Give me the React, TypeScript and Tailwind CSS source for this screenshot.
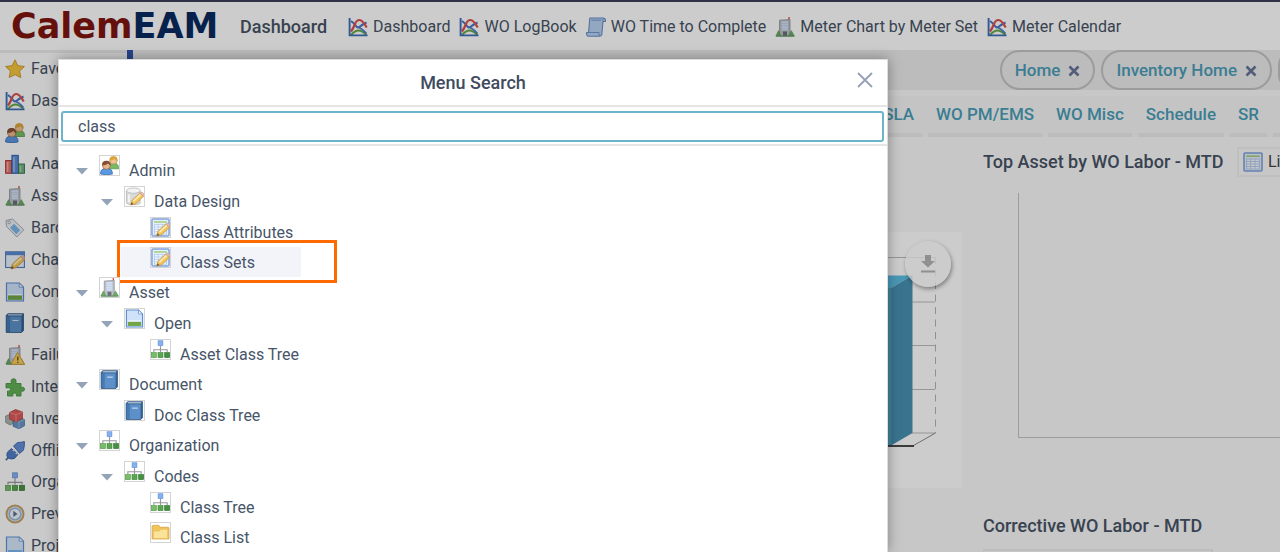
import React from "react";

type IconName =
  | "star" | "lines" | "people" | "bars" | "building" | "tag" | "change" | "picture"
  | "book" | "failure" | "puzzle" | "cubes" | "plug" | "org" | "clock" | "page"
  | "scroll" | "dbEdit" | "tableEdit" | "folder" | "table";

const Pencil = () => (
  <g>
    <path d="M6 19l1.400-5L15.500 6.500l4 3.400-8.200 7.700z" fill="#f3c55c" stroke="#c08f3a" strokeWidth=".7" />
    <path d="M8.800 15l7.800-7.200" stroke="#fdeebb" strokeWidth="1.600" />
    <path d="M15.500 6.500l1.400-1.200q2 .3 3 2l-.4 2.600z" fill="#e8b9a4" stroke="#b98" strokeWidth=".5" />
    <path d="M6 19l.9-3 2 2z" fill="#7a5526" />
  </g>
);

const Building = () => (
  <g>
    <path d="M14 0v3" stroke="#d33" strokeWidth="1.200" />
    <path d="M4.500 3.200L15 2.600V19H4.500z" fill="#bcc0c6" stroke="#8d9299" strokeWidth=".8" />
    <path d="M6.600 5.200h6.400M6.600 7.600h6.400M6.600 10h6.400M6.600 12.200h6.400" stroke="#cfe0f8" strokeWidth="1.900" />
    <path d="M8 14.500h4V19H8z" fill="#6b7179" />
    <path d="M.8 19l2.700-5.400L6.200 19zM13.400 19l2.900-5.400L19.400 19z" fill="#6bab64" stroke="#4c8f4e" strokeWidth=".5" />
    <path d="M1 19.200h18.400" stroke="#6d9a6c" />
  </g>
);

const TableGrid = () => (
  <g>
    <rect x="1" y="1" width="18" height="18" rx="1" fill="#e4effd" stroke="#7fa3dc" strokeWidth="1.600" />
    <path d="M3.200 4.200h13.600" stroke="#a6cc7c" strokeWidth="1.600" />
    <rect x="3.600" y="7" width="12.800" height="10" fill="#f4f8fe" stroke="#b3c9ea" strokeWidth=".9" />
    <path d="M3.600 9.500h12.800M3.600 12h12.800M3.600 14.500h12.800M7.600 7v10M12 7v10" stroke="#b3c9ea" strokeWidth=".9" />
  </g>
);

const shapes: Record<IconName, React.ReactNode> = {
  star: <path d="M10 .8l2.800 5.900 6.600.8-4.800 4.600 1.200 6.500L10 15.600l-5.800 3 1.200-6.500L.6 7.500l6.600-.8z" fill="#f3c53c" stroke="#cf9c33" strokeWidth="1" strokeLinejoin="round" />,
  lines: (
    <g fill="none">
      <path d="M3 18Q7 13.500 10.500 13.500T18.500 18" stroke="#62a848" strokeWidth="2.200" />
      <path d="M3 4q3.500 2.500 5 5t4 .5T18.500 5.500" stroke="#4a78c8" strokeWidth="2.100" />
      <path d="M10 10q4 1.500 8.500 6.500" stroke="#4a78c8" strokeWidth="1.500" />
      <path d="M3 14.500Q5.500 11 7 7t4.500-4 7.200 7.500" stroke="#dc4f4f" strokeWidth="2.200" />
      <path d="M1.600 1v17.400h17.900" stroke="#3f6fba" strokeWidth="1.900" />
    </g>
  ),
  people: (
    <g>
      <path d="M9.500 12.500q0-5 5-5t5 5v1h-9z" fill="#79b964" stroke="#4c8d42" strokeWidth=".7" />
      <circle cx="14.200" cy="4.600" r="3.900" fill="#f0c497" stroke="#b9813a" strokeWidth=".6" />
      <path d="M10 5Q9.600.3 14.300.3t4.200 5.500Q16.400 5 15.500 3.200 13 5.200 10 5z" fill="#dba53e" />
      <path d="M.6 19q-.5-6 6.200-6t6.200 6q-6.200 1.400-12.400 0z" fill="#5b98e2" stroke="#3468b0" strokeWidth=".8" />
      <circle cx="6.700" cy="9.800" r="4.200" fill="#e8b48c" stroke="#8d5a35" strokeWidth=".6" />
      <path d="M2.200 10Q1.800 5 6.800 5.100t4.400 5.300Q9.500 9.500 8.600 7.900 5.500 10.300 2.200 10z" fill="#855036" />
    </g>
  ),
  bars: (
    <g strokeWidth=".9">
      <rect x=".6" y="6.500" width="6" height="12.800" fill="#e2716b" stroke="#b4322e" />
      <rect x="6.900" y="1.300" width="6.400" height="18" fill="#5a8cd6" stroke="#2b57a6" />
      <rect x="13.500" y="10" width="6" height="9.300" fill="#6fae80" stroke="#33784a" />
      <path d="M2.600 8v10M9 3v15M15.500 11.500v6.500" stroke="#fff" strokeOpacity=".4" strokeWidth="1.600" />
    </g>
  ),
  building: <Building />,
  tag: (
    <g>
      <path d="M1 2.500L7.500 1 18.800 11.800 11.800 19 1.500 8.500z" fill="#edf0f3" stroke="#a3abb5" strokeWidth="1" strokeLinejoin="round" />
      <path d="M9 5.800l6.300 6.400-4 4L5 9.800z" fill="#7fb6e8" />
      <circle cx="4.200" cy="4.500" r="1.300" fill="#fff" stroke="#8d98a5" strokeWidth=".8" />
    </g>
  ),
  change: (
    <g>
      <rect x=".6" y="1.800" width="18.800" height="15.700" fill="#e8f0fb" stroke="#4f7bbf" strokeWidth="1.100" />
      <path d="M.8 2h18.400v3.200H.8z" fill="#5c89cf" />
      <Pencil />
    </g>
  ),
  picture: (
    <g>
      <path d="M1.500 1h12.700l4.300 4.200V19h-17z" fill="#cfe2fa" stroke="#5f8ccd" strokeWidth="1.200" />
      <path d="M14.200 1v4.200h4.300z" fill="#fff" stroke="#5f8ccd" strokeWidth=".8" />
      <path d="M3 13.500h14v4.300H3z" fill="#72a545" />
      <path d="M3 12.500h14" stroke="#f4faff" />
    </g>
  ),
  book: (
    <g>
      <path d="M1.200 2.500L2.800.7h15.700v16.800l-1.800 1.900H1.200z" fill="#35618f" stroke="#2b5384" strokeWidth=".8" />
      <path d="M3 1.900h14" stroke="#cfdcea" strokeWidth="1.100" />
      <path d="M4.600 3.500h11.800V19H4.600z" fill="#5d90c8" />
      <path d="M1.800 3.500h2.400v15.300H1.800z" fill="#447ab5" />
      <path d="M7.500 7.500h6" stroke="#d3e3f4" strokeWidth="1.100" />
    </g>
  ),
  failure: (
    <g>
      <Building />
      <path d="M12.500 7.500L19.600 19.300H6z" fill="#f5cf62" stroke="#cf9a38" strokeWidth="1" strokeLinejoin="round" />
      <path d="M12.800 11.500v4M12.800 16.700v1.300" stroke="#7a5a20" strokeWidth="1.500" />
    </g>
  ),
  puzzle: <path d="M1 6.500h5.500Q5 2 8.500 1.800T10.800 6.500H16v4.300q3.500-1.500 3.500 1.400T16 14v5h-4.600q1-3-1.700-3t-1.800 3H2.500v-5q3 .8 3-1.600T1 11z" fill="#63b156" stroke="#459543" strokeWidth=".9" strokeLinejoin="round" />,
  cubes: (
    <g strokeLinejoin="round" strokeWidth=".7">
      <path d="M.6 7l4.500-1.700 4 2v6.500l-4 2.200-4.500-2.500z" fill="#aab4af" stroke="#7c8782" />
      <path d="M8 10.500l6.500-2 5 2v6.300l-5.600 3-5.900-2.500z" fill="#6996c4" stroke="#426e9f" />
      <path d="M8 10.500l6 2.300 5.500-2.300M14 12.800v6.700" fill="none" stroke="#a7c9ee" />
      <path d="M4.500 3.500L10.500.5l7 2.500v6.500L11.200 13l-6.700-3z" fill="#dd5a5a" stroke="#b03b3b" />
      <path d="M4.500 3.500l6.500 2.300 6.500-2.800M11 5.800V13" fill="none" stroke="#f1a0a0" />
    </g>
  ),
  plug: (
    <g>
      <path d="M.8 19.200l3.500-3.700" stroke="#4b6da5" strokeWidth="1.700" />
      <path d="M2.500 11L6.500 7.500l6.500 6-3.500 4q-4 1.500-7-1-1.500-2.800 0-5.500z" fill="#527fc6" stroke="#345ca2" strokeWidth=".8" />
      <path d="M8.500 5l4-3.500 4-.3L19.400.5v4.200l-1 4.600-3.800 3.200z" fill="#638fd5" stroke="#345ca2" strokeWidth=".8" />
      <path d="M9.500 8.500L7.800 10M12.500 11.300l-1.700 1.700" stroke="#d8dde5" strokeWidth="1.600" />
    </g>
  ),
  org: (
    <g>
      <path d="M10 6v4M3 12.500V10.300h14v2.200M10 10v2.500" fill="none" stroke="#96999f" strokeWidth="1.200" />
      <rect x="7.500" y=".8" width="5" height="5" fill="#86b1f0" stroke="#5f90da" strokeWidth=".7" />
      <rect x=".4" y="13.300" width="5.200" height="5.200" fill="#79bd68" stroke="#519a49" strokeWidth=".7" />
      <rect x="7.400" y="13.300" width="5.200" height="5.200" fill="#5ba650" stroke="#418b3b" strokeWidth=".7" />
      <rect x="14.400" y="13.300" width="5.200" height="5.200" fill="#469141" stroke="#337630" strokeWidth=".7" />
    </g>
  ),
  clock: (
    <g>
      <circle cx="10" cy="10" r="8.500" fill="#dbe8f5" stroke="#c5a169" strokeWidth="2" />
      <circle cx="10" cy="10" r="5.800" fill="#eef5fc" stroke="#9cb8d8" strokeWidth="1.600" />
      <path d="M8.300 6.800l4.200 3.300-4.200 2.800z" fill="#5d7390" />
    </g>
  ),
  page: (
    <g>
      <path d="M1.500 1h12.700l4.300 4.200V19h-17z" fill="#d6e6fa" stroke="#5f93d8" strokeWidth="1.200" />
      <path d="M14.200 1v4.200h4.300z" fill="#fff" stroke="#5f93d8" strokeWidth=".8" />
      <path d="M3 14h14v4H3z" fill="#7db7ee" />
    </g>
  ),
  scroll: (
    <g>
      <path d="M3.800 1h13.700q2.500.5 2 3.500h-2.500L15.800 17.500q-.6 1.700-2.300 1.700H2Q.2 18.500.6 15.500h2z" fill="#b9d1f0" stroke="#6690c8" strokeWidth="1.100" strokeLinejoin="round" />
      <path d="M2.800 15.500h10.200q-.5 3 .8 3.400M17 4.500q-.8-2.500 1-3.200M5.500 3.200h9.500" fill="none" stroke="#6690c8" strokeWidth=".9" />
    </g>
  ),
  dbEdit: (
    <g>
      <path d="M1.500 4v12.500q0 2 7.500 2t7-2V4z" fill="#d9dadb" stroke="#b4b5b7" strokeWidth=".8" />
      <ellipse cx="8.800" cy="3.800" rx="7.300" ry="2.800" fill="#f3f3f4" stroke="#b4b5b7" strokeWidth=".8" />
      <path d="M4.200 8v8" stroke="#f4f4f4" strokeWidth="2" />
      <Pencil />
    </g>
  ),
  tableEdit: (
    <g>
      <TableGrid />
      <Pencil />
    </g>
  ),
  folder: (
    <g>
      <path d="M1.200 16.800V3.500q0-1 1-1h6l1.500 2h8.200q1 0 1 1v11.300z" fill="#f1c55a" stroke="#d7a644" strokeWidth=".9" />
      <path d="M2.500 16.300V8.500h6.300l1.600-2h7.100v9.800z" fill="#fbe39a" stroke="#e6bb5b" strokeWidth=".7" />
    </g>
  ),
  table: <TableGrid />,
};

const Icon = ({ name, className = "size-5" }: { name: IconName; className?: string }) => (
  <svg viewBox="0 0 20 20" className={`shrink-0 ${className}`} aria-hidden="true">
    {shapes[name]}
  </svg>
);

const shortcuts: { icon: IconName; label: string }[] = [
  { icon: "lines", label: "Dashboard" },
  { icon: "lines", label: "WO LogBook" },
  { icon: "scroll", label: "WO Time to Complete" },
  { icon: "building", label: "Meter Chart by Meter Set" },
  { icon: "lines", label: "Meter Calendar" },
];

const modules: { icon: IconName; label: string }[] = [
  { icon: "star", label: "Favorites" },
  { icon: "lines", label: "Dashboard" },
  { icon: "people", label: "Admin" },
  { icon: "bars", label: "Analysis" },
  { icon: "building", label: "Asset" },
  { icon: "tag", label: "Barcode" },
  { icon: "change", label: "Change" },
  { icon: "picture", label: "Contract" },
  { icon: "book", label: "Document" },
  { icon: "failure", label: "Failure" },
  { icon: "puzzle", label: "Integration" },
  { icon: "cubes", label: "Inventory" },
  { icon: "plug", label: "Offline" },
  { icon: "org", label: "Organization" },
  { icon: "clock", label: "Preventive" },
  { icon: "page", label: "Project" },
];

type Row = { level: 0 | 1 | 2; icon: IconName; label: string; open?: boolean; marked?: boolean };

const results: Row[] = [
  { level: 0, icon: "people", label: "Admin", open: true },
  { level: 1, icon: "dbEdit", label: "Data Design", open: true },
  { level: 2, icon: "tableEdit", label: "Class Attributes" },
  { level: 2, icon: "tableEdit", label: "Class Sets", marked: true },
  { level: 0, icon: "building", label: "Asset", open: true },
  { level: 1, icon: "picture", label: "Open", open: true },
  { level: 2, icon: "org", label: "Asset Class Tree" },
  { level: 0, icon: "book", label: "Document", open: true },
  { level: 1, icon: "book", label: "Doc Class Tree" },
  { level: 0, icon: "org", label: "Organization", open: true },
  { level: 1, icon: "org", label: "Codes", open: true },
  { level: 2, icon: "org", label: "Class Tree" },
  { level: 2, icon: "folder", label: "Class List" },
];

const indent = ["pl-0", "pl-[25px]", "pl-[51px]"];

const TreeRow = ({ row }: { row: Row }) => (
  <li className={`relative w-60 ${indent[row.level]} ${row.open ? "h-[31px]" : "h-[30px]"}`}>
    <div className="flex h-full items-start">
      {row.open ? (
        <button type="button" aria-label={`Collapse ${row.label}`} className="mt-[13px] w-3 shrink-0">
          <svg viewBox="0 0 12 7" className="h-[7px] w-3">
            <path d="M0 0h12L6 6.500z" fill="#94a3b8" />
          </svg>
        </button>
      ) : (
        <span className="w-3 shrink-0" />
      )}
      <a
        href="#"
        className={`flex h-full items-start ${row.marked ? "-ml-[18px] w-[180px] bg-[#f3f4f9] pl-[29px]" : "ml-[11px]"}`}
      >
        <span className="size-[21px] shrink-0 border border-[#d4d4d4] bg-white">
          <Icon name={row.icon} className="size-[19px]" />
        </span>
        <span className="ml-[9px] pt-1 leading-6 whitespace-nowrap">{row.label}</span>
      </a>
    </div>
    {row.marked && (
      <span className="pointer-events-none absolute -top-[7px] left-[41px] h-[43px] w-[220px] border-3 border-[#ff6a00]" />
    )}
  </li>
);

const MenuSearch = () => (
  <div className="absolute inset-0 flex items-stretch bg-black/20 pt-[59px] pl-[58px]">
    <section
      role="dialog"
      aria-label="Menu Search"
      className="w-[830px] overflow-hidden border border-b-0 border-[#dcdcdc] bg-white text-[#475569] shadow-[0_0_12px_rgba(0,0,0,0.35)]"
    >
      <header className="relative flex h-[47px] items-center justify-center border-b-2 border-[#e5e5e5]">
        <h2 className="text-lg font-medium text-[#3f4b5f]">Menu Search</h2>
        <button type="button" aria-label="Close" className="absolute right-[14px] top-3">
          <svg viewBox="0 0 16 16" className="size-4">
            <path d="M1 1l14 14M15 1L1 15" stroke="#94a0b4" strokeWidth="1.800" />
          </svg>
        </button>
      </header>
      <div className="border-b-2 border-[#e5e5e5] pt-1 pr-[3px] pb-[2px] pl-[2px]">
        <input
          type="text"
          aria-label="Search menus"
          defaultValue="class"
          className="block h-[31px] w-full rounded-[3px] border-2 border-[#6cb4cb] bg-white px-[15px] text-base outline-none"
        />
      </div>
      <ul className="pt-[9px] pl-[17px] text-base">
        {results.map((row) => (
          <TreeRow key={row.label} row={row} />
        ))}
      </ul>
    </section>
  </div>
);

const PageTab = ({ label }: { label: string }) => (
  <div className="flex h-10 shrink-0 items-center gap-2 rounded-full border-2 border-[#c3c3c3] px-[13px] pt-px text-[17px] font-medium text-[#4a9db8]">
    <a href="#" className="whitespace-nowrap">{label}</a>
    <button type="button" aria-label={`Close ${label}`}>
      <svg viewBox="0 0 12 12" className="size-3">
        <path d="M1.500 1.500l9 9M10.500 1.500l-9 9" stroke="#66749a" strokeWidth="2.600" />
      </svg>
    </button>
  </div>
);

const BarChart = () => (
  <svg viewBox="762 232 200 256" className="ml-auto block h-64 w-[200px]" aria-hidden="true">
    <path d="M762 257.500h173M762 302h173M762 345.500h173M762 389.500h173M762 433h173" stroke="#bdbdbd" fill="none" />
    <path d="M935.500 257v176" stroke="#b4b4b4" strokeDasharray="7 5.500" />
    <path d="M935.500 433l-22 12.500" stroke="#8a8a8a" fill="none" />
    <path d="M862 287.500h29.500v158H862z" fill="#57a5c6" />
    <path d="M862 288l22-12.500h28.500L891 288z" fill="#5cbfe4" />
    <path d="M891 288l21.500-12.500V433L891 445.500z" fill="#4892b3" />
    <path d="M762 446h152" stroke="#111" strokeWidth="1.500" />
  </svg>
);

export default function App() {
  return (
    <div className="relative h-screen overflow-hidden bg-[#f9f9f9] font-['Roboto',sans-serif] text-base text-[#475365]">
      <div className="h-[2px] bg-[#3c3e58]" />
      <header className="flex h-12 items-center bg-white pl-[11px] whitespace-nowrap">
        <a href="#" className="flex w-[229px] items-baseline font-['DejaVu_Sans',sans-serif] text-[35px] leading-[48px] font-bold">
          <span className="text-[#80150f]">Calem</span>
          <span className="text-[#082a60]">EAM</span>
        </a>
        <h1 className="mr-[21px] pt-px text-lg font-medium">Dashboard</h1>
        <nav className="flex items-center gap-[9px] pt-px">
          {shortcuts.map((item) => (
            <a key={item.label} href="#" className="flex items-center gap-[5px]">
              <Icon name={item.icon} />
              {item.label}
            </a>
          ))}
        </nav>
      </header>

      <div className="flex">
        <nav className="w-[127px] shrink-0 border-t-3 border-[#ececec] bg-[#fdfdfd]">
          <ul className="grid h-[509px] auto-rows-fr">
            {modules.map((item) => (
              <li key={item.label} className="flex">
                <a href="#" className="flex items-center gap-[6px] pl-[5px]">
                  <Icon name={item.icon} />
                  {item.label}
                </a>
              </li>
            ))}
          </ul>
        </nav>
        <div className="w-[6px] shrink-0 bg-[#2f57b0]" />

        <main className="min-w-0 flex-1">
          <div className="flex h-10 justify-end gap-[6px] bg-[#ebebeb]">
            <PageTab label="Home" />
            <PageTab label="Inventory Home" />
            <div className="w-[2px] overflow-hidden">
              <PageTab label="Asset" />
            </div>
          </div>
          <nav className="mt-[6px] flex justify-end gap-[6px] overflow-hidden bg-[#f6f6f6] text-[17px] font-medium whitespace-nowrap text-[#4a9db8]">
            {["WO SLA", "WO PM/EMS", "WO Misc", "Schedule", "SR"].map((tab) => (
              <a key={tab} href="#" className="border-b-4 border-[#ececec] px-2 leading-[37px]">
                {tab}
              </a>
            ))}
            <span className="w-[7px] border-b-4 border-[#ececec]" />
          </nav>

          <div className="flex">
            <section className="flex-1 pt-[95px]">
              <div className="relative bg-white">
                <BarChart />
                <button
                  type="button"
                  aria-label="Download chart"
                  className="absolute top-[9px] right-[11px] flex size-[46px] items-center justify-center rounded-full bg-white/80 shadow-[1px_2px_4px_rgba(0,0,0,0.4)]"
                >
                  <svg viewBox="0 0 14 18" className="h-[18px] w-[14px]">
                    <path d="M4 0h6v6h4l-7 6.500L0 6h4zM0 15.500h14v2H0z" fill="#b4b4b4" />
                  </svg>
                </button>
              </div>
            </section>

            <section className="ml-[21px] w-[297px] shrink-0 overflow-hidden">
              <div className="mt-[10px] flex h-[30px] items-center justify-between">
                <h2 className="text-lg font-medium whitespace-nowrap">Top Asset by WO Labor - MTD</h2>
                <div className="w-[43px] overflow-hidden">
                  <button type="button" className="flex h-[30px] items-center gap-[5px] border-2 border-[#efefef] pr-3 pl-1 text-[#444]">
                    <Icon name="table" />
                    List
                  </button>
                </div>
              </div>
              <div className="mt-4 ml-[35px] h-[245px] border-b border-l border-[#c4c4c4]" />
              <h2 className="mt-[74px] text-lg leading-[27px] font-medium whitespace-nowrap">Corrective WO Labor - MTD</h2>
              <div className="mt-[10px] h-[30px] w-[230px] border-2 border-[#ededed]" />
            </section>
          </div>
        </main>
      </div>

      <MenuSearch />
    </div>
  );
}
